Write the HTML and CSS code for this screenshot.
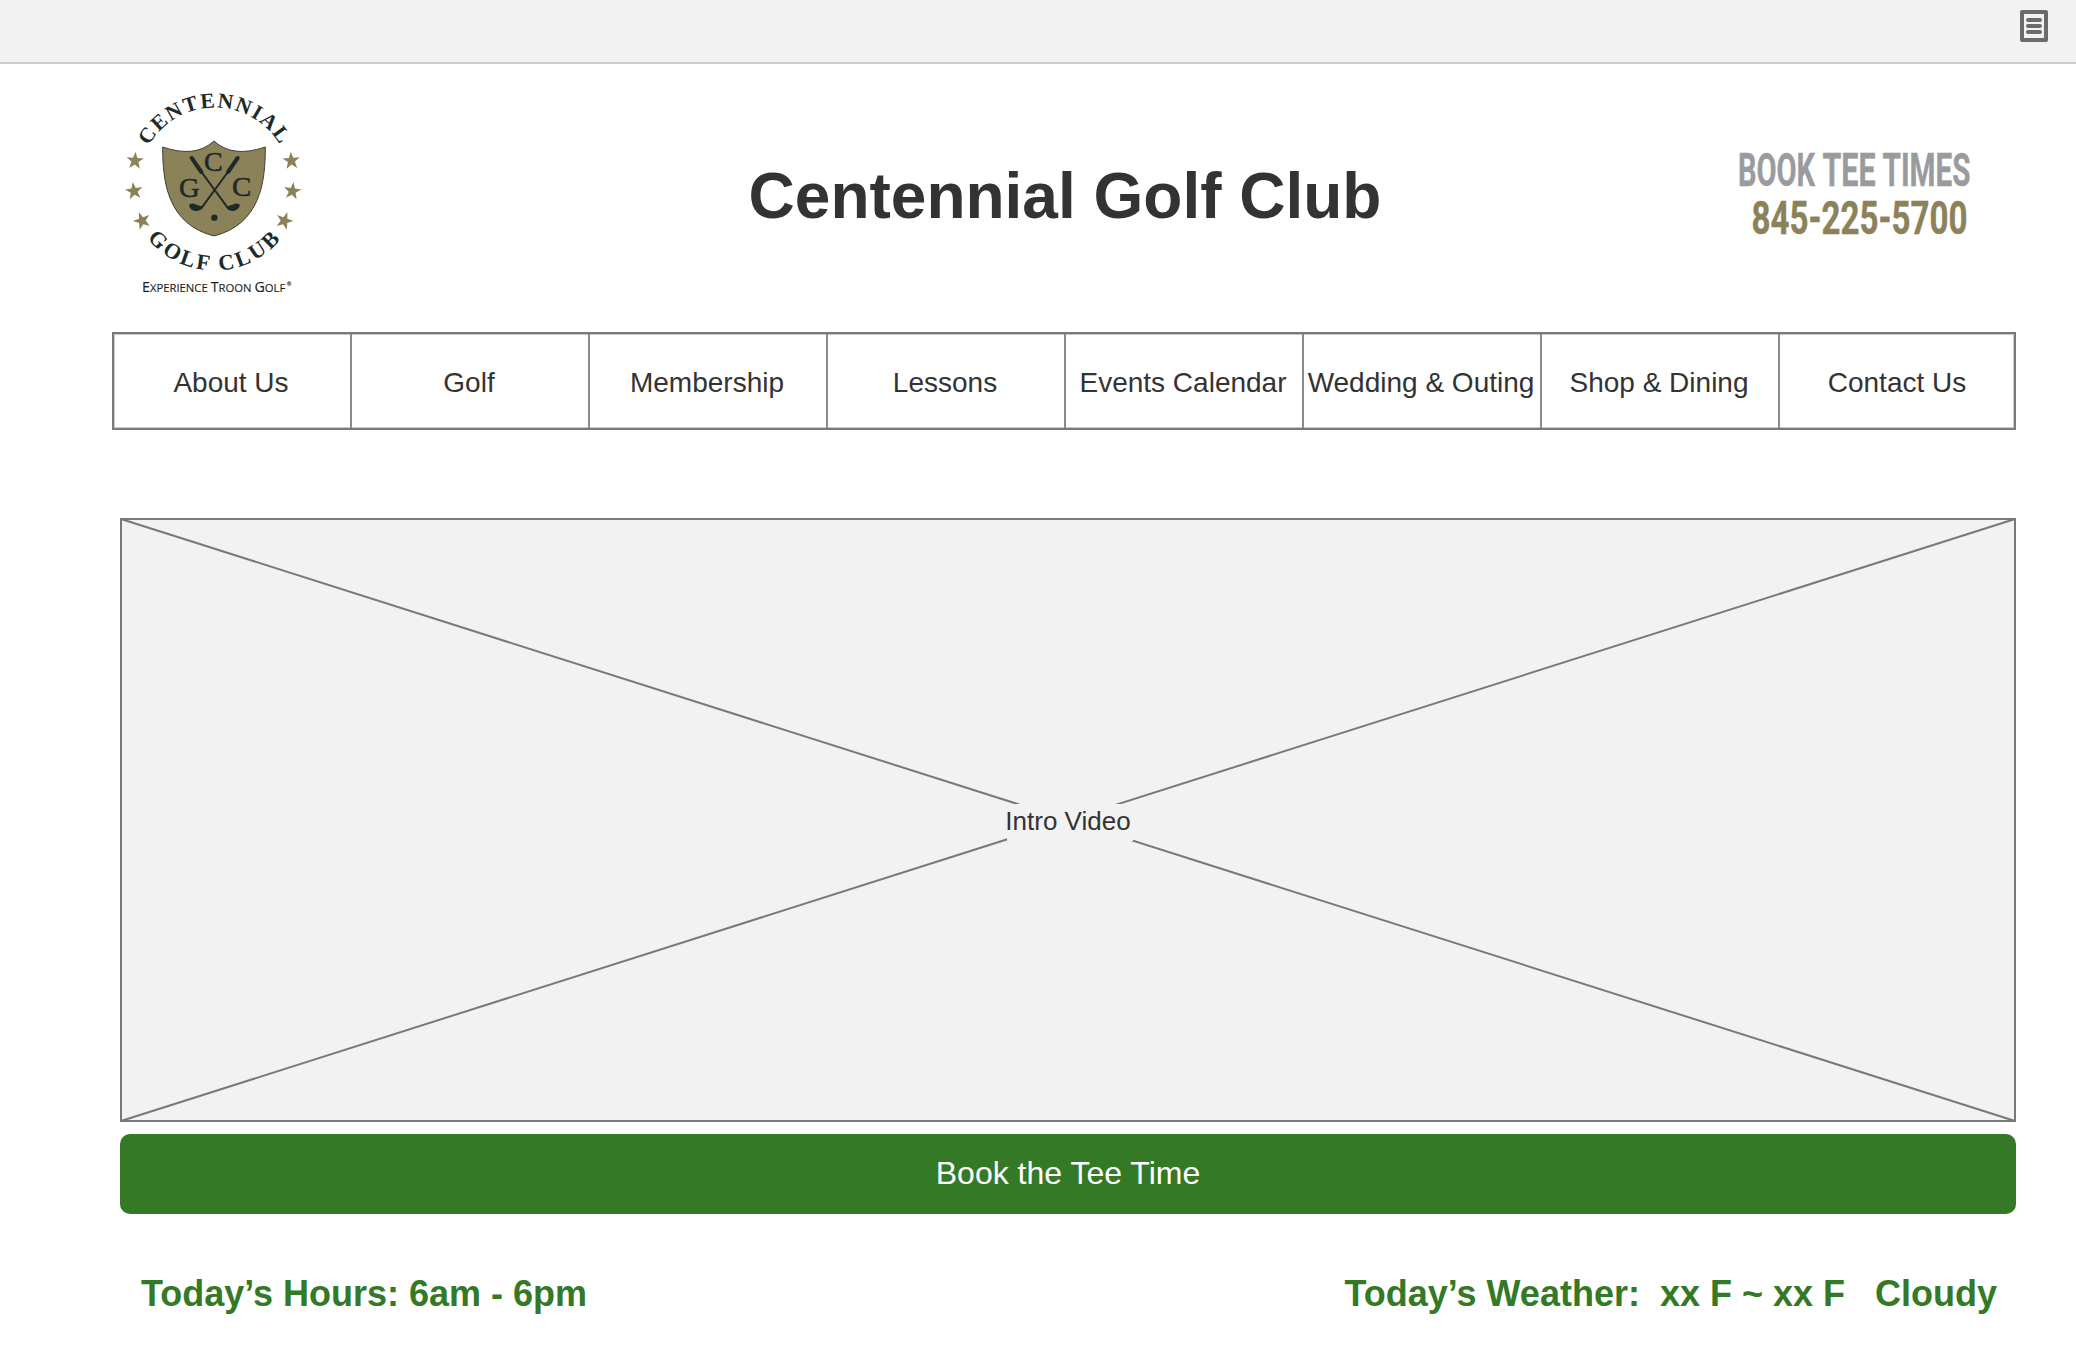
FILE: index.html
```html
<!DOCTYPE html>
<html lang="en">
<head>
<meta charset="utf-8">
<title>Centennial Golf Club</title>
<link rel="stylesheet" href="styles.css">
</head>
<body>
<div class="topbar">
  <svg class="notes-icon" width="28" height="32" viewBox="0 0 28 32">
    <rect width="28" height="32" rx="2" fill="#6b6b6b"/>
    <rect x="4" y="4" width="20" height="24" fill="#f2f2f2"/>
    <path d="M8 10H20M8 16H20M8 22H20" stroke="#6b6b6b" stroke-width="4" stroke-linecap="round"/>
  </svg>
</div>
<header class="header">
  <svg class="logo" width="220" height="220" viewBox="0 0 660 660">
    <defs>
      <path id="arc-top" d="M146 198A227.500 227.500 0 0 1 546 206"/>
      <path id="arc-bottom" d="M142 475A258 258 0 0 0 548 470"/>
      <polygon id="star" points="0,-27 6.5,-8.5 26,-8.5 10.500,3.500 16,23 0,11.500 -16,23 -10.500,3.500 -26,-8.500 -6.500,-8.500"/>
    </defs>
    <path d="M188 201Q286 235 342 183Q398 235 496 201C496 310 480 432 342 468C204 432 188 310 188 201Z" fill="#8c825a" stroke="#3f4034" stroke-width="3"/>
    <g class="logo-serif">
      <text font-size="64"><textPath href="#arc-top" textLength="474" lengthAdjust="spacing">CENTENNIAL</textPath></text>
      <text font-size="66"><textPath href="#arc-bottom" textLength="456" lengthAdjust="spacing">GOLF CLUB</textPath></text>
    </g>
    <g class="logo-initials" font-size="82">
      <text x="312" y="273" textLength="56" lengthAdjust="spacingAndGlyphs">C</text>
      <text x="237" y="350" textLength="62" lengthAdjust="spacingAndGlyphs">G</text>
      <text x="396" y="348" textLength="58" lengthAdjust="spacingAndGlyphs">C</text>
    </g>
    <g fill="none" stroke="#1d2a28" stroke-linecap="round">
      <path d="M275 234L304 276M413 234L384 276" stroke-width="12"/>
      <path d="M300 270L385 386M388 270L303 386" stroke-width="6"/>
    </g>
    <path d="M309 379L299 391Q288 396 275 389Q264 380 269 373Q276 367 290 374L302 378Z" fill="#1d2a28"/>
    <path d="M378 379L388 391Q399 396 410 389Q423 380 418 373Q411 367 397 374L385 378Z" fill="#1d2a28"/>
    <circle cx="343" cy="413" r="9.500" fill="#1d2a28"/>
    <g fill="#8c825a">
      <use href="#star" transform="translate(105 242) rotate(4)"/>
      <use href="#star" transform="translate(102 333) rotate(-8)"/>
      <use href="#star" transform="translate(126 422) rotate(-20)"/>
      <use href="#star" transform="translate(574 242) rotate(-4)"/>
      <use href="#star" transform="translate(577 333) rotate(8)"/>
      <use href="#star" transform="translate(553 422) rotate(20)"/>
    </g>
    <g class="logo-tagline">
      <text x="126" y="635" textLength="430" lengthAdjust="spacingAndGlyphs"><tspan font-size="43">E</tspan>XPERIENCE <tspan font-size="43">T</tspan>ROON <tspan font-size="43">G</tspan>OLF</text>
      <text x="560" y="618" font-size="17">®</text>
    </g>
  </svg>
  <h1 class="title">Centennial Golf Club</h1>
  <svg class="booking" width="240" height="100" viewBox="0 0 240 100">
    <g fill="#9a9b9e" stroke="#9a9b9e">
      <text transform="translate(6 46) scale(1 1.420)" textLength="77" lengthAdjust="spacingAndGlyphs">BOOK</text>
      <text transform="translate(90.500 46) scale(1 1.420)" textLength="53" lengthAdjust="spacingAndGlyphs">TEE</text>
      <text transform="translate(150.500 46) scale(1 1.420)" textLength="88" lengthAdjust="spacingAndGlyphs">TIMES</text>
    </g>
    <text fill="#8c825a" stroke="#8c825a" transform="translate(19.500 94) scale(1 1.420)" textLength="216" lengthAdjust="spacingAndGlyphs">845-225-5700</text>
  </svg>
</header>
<nav class="nav">
  <a>About Us</a><a>Golf</a><a>Membership</a><a>Lessons</a><a>Events Calendar</a><a>Wedding &amp; Outing</a><a>Shop &amp; Dining</a><a>Contact Us</a>
</nav>
<main class="main">
  <div class="video">
    <svg class="cross" viewBox="0 0 1896 604" preserveAspectRatio="none"><path d="M1 1L1895 603M1895 1L1 603" stroke="#797979" stroke-width="2"/></svg>
    <span class="video-label">Intro Video</span>
  </div>
  <div class="book">Book the Tee Time</div>
  <div class="today">
    <span>Today’s Hours: 6am - 6pm</span>
    <span class="weather">Today’s Weather:  xx F ~ xx F   Cloudy</span>
  </div>
</main>
</body>
</html>
```
FILE: styles.css
```css
* { box-sizing: border-box; }
body {
  margin: 0;
  height: 1348px;
  overflow: hidden;
  background: #fff;
  color: #333;
  font-family: "Liberation Sans", Arial, sans-serif;
}
.topbar {
  height: 64px;
  padding: 10px 28px 0;
  display: flex;
  justify-content: flex-end;
  background: #f2f2f2;
  border-bottom: 2px solid #ccc;
}
.header {
  height: 268px;
  padding: 16px 96px 0 100px;
  display: grid;
  grid-template-columns: 220px 1fr 248px;
  align-items: start;
}
.title {
  margin: 80px 0 0;
  padding-left: 78px;
  font-size: 64px;
  line-height: 72px;
  text-align: center;
  white-space: nowrap;
}
.booking {
  margin-top: 60px;
  overflow: visible;
  font-family: "Liberation Sans Narrow", Roboto, sans-serif;
  font-weight: 700;
  font-size: 33px;
  stroke-width: 0.3px;
}
.logo-serif, .logo-initials {
  font-family: "Liberation Serif", serif;
  fill: #1d2a28;
}
.logo-serif { font-weight: 700; }
.logo-initials { stroke: #1d2a28; stroke-width: 1.5px; }
.logo-tagline {
  font-family: "Open Sans", sans-serif;
  font-size: 34px;
  fill: #1d1d1d;
  stroke: #1d1d1d;
  stroke-width: 0.4px;
}
.nav {
  width: 1904px;
  height: 98px;
  margin-left: 112px;
  display: grid;
  grid-template-columns: repeat(8, 238px);
  border: 2px solid #797979;
  box-shadow: inset 0 0 0 1px #c9c9c9;
}
.nav a {
  display: flex;
  align-items: center;
  justify-content: center;
  margin-left: -2px;
  padding: 4px 4px 0 0;
  border-left: 2px solid #8b8b8b;
  font-size: 28px;
  white-space: nowrap;
}
.nav a:first-child { border-color: transparent; }
.main {
  width: 1896px;
  margin: 88px 0 0 120px;
}
.video {
  position: relative;
  height: 604px;
  display: flex;
  align-items: center;
  justify-content: center;
  background: #f2f2f2;
  border: 2px solid #797979;
}
.cross {
  position: absolute;
  inset: -2px;
  width: 1896px;
  height: 604px;
}
.video-label {
  position: relative;
  height: 37px;
  margin: 5px -2px 0 0;
  padding-right: 2px;
  line-height: 34px;
  background: linear-gradient(#f2f2f2, #f2f2f2) 2px 0 no-repeat;
  font-size: 26px;
}
.book {
  height: 80px;
  margin-top: 12px;
  border-radius: 10px;
  background: #337926;
  color: #fff;
  font-size: 32px;
  line-height: 78px;
  text-align: center;
}
.today {
  margin-top: 60px;
  padding: 0 19px 0 21px;
  display: flex;
  justify-content: space-between;
  color: #337926;
  font-size: 36px;
  font-weight: 700;
  line-height: 40px;
  white-space: pre;
}
```
